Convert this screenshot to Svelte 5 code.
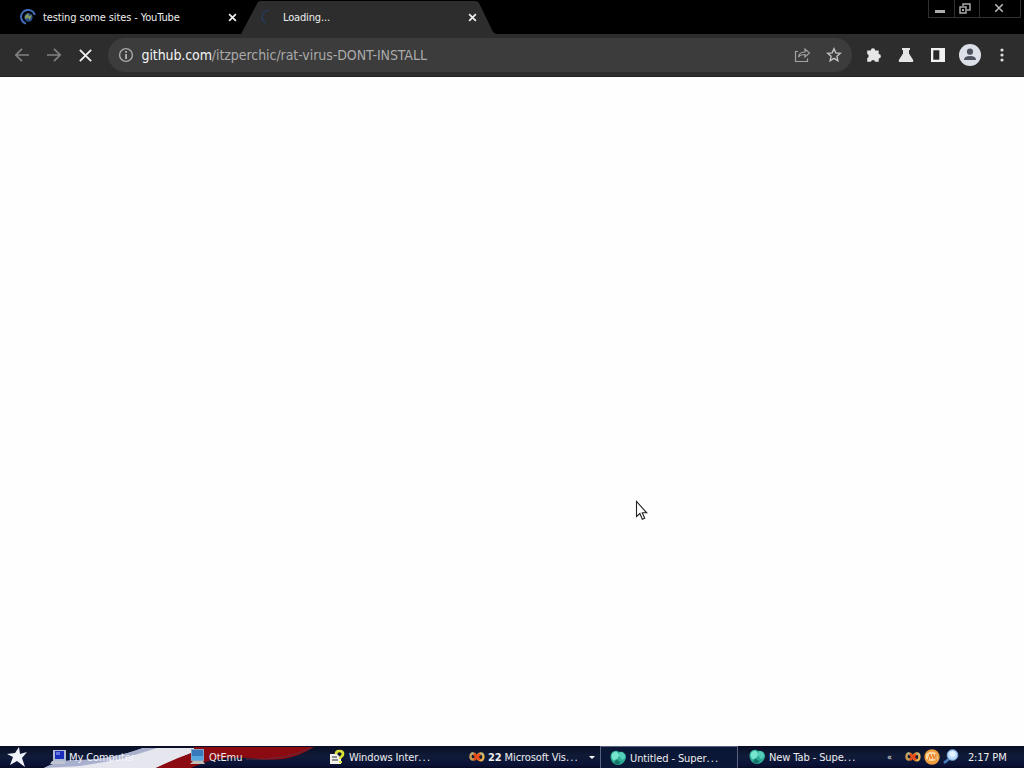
<script>
  const controls = ['minimize', 'restore', 'close'];
</script>

{#snippet cross(size, width)}
  <svg width={size} height={size} viewBox="0 0 12 12"><path d="M1.5 1.5 10.5 10.5M10.5 1.5 1.5 10.5" fill="none" stroke="currentColor" stroke-width={width} /></svg>
{/snippet}

{#snippet infinity()}
  <svg width="16" height="14" viewBox="0 0 16 14">
    <path d="M7.5 7C5.5 2.5 1.5 2.5 1.5 6.5s4 4 6 .5" fill="none" stroke="#c99c50" stroke-width="2.4" />
    <path d="M8 7c2-4.6 6.4-4.6 6.4 0S10 11.5 8 7" fill="none" stroke="#e6b44e" stroke-width="2.4" />
    <path d="M5 4 11 10M11 4 5 10" stroke="#e44b16" stroke-width="2.6" />
    <path d="m2 4 2-1M12 3.5l2 1" stroke="#9eb7a5" stroke-width="1.4" />
  </svg>
{/snippet}

{#snippet browserIcon()}
  <svg width="17" height="16" viewBox="0 0 17 16">
    <path d="M1 4C3 0 7 .3 9 2c3-1 7 1 7 5 0 4-4 8-8 8C3 15-1 9 1 4Z" fill="#2eae98" />
    <path d="M2 4c3-4 7-2 7 2l-3 5C2 10 1 7 2 4Z" fill="#76e6ce" />
    <path d="M9 3c3-2 7 1 6 5l-3 2-3-4Z" fill="#55cfba" />
    <path d="m6 9 4 3 2-1-4 4-4-2Z" fill="#147568" />
  </svg>
{/snippet}

<div class="screen">
  <header class="tabs">
    <svg class="tab-shape" width="258" height="34" viewBox="0 0 258 34"><path d="M1 34 18 2q1-1 3-1h214q3 0 4 2l14 29 3 2Z" fill="#2d2d2d" /></svg>
    <div class="tab first">
      <svg width="16" height="16" viewBox="0 0 16 16"><path d="M6 14.6A7 7 0 1 1 14.8 6" fill="none" stroke="#4169b4" stroke-width="2" /><circle cx="8.5" cy="8.5" r="4.2" fill="#284d8e" /><path d="m5 7 3-3 1 3 3-1-2 5-2-2-3 1Z" fill="#82985f" /></svg>
      <span class="tab-title">testing some sites - YouTube</span>
      <button aria-label="Close tab">{@render cross(9, 2.3)}</button>
    </div>
    <div class="tab second">
      <svg width="16" height="16" viewBox="0 0 16 16"><path d="M5.5 14A6.8 6.8 0 0 1 9 1.3" fill="none" stroke="#293954" stroke-width="1.7" /></svg>
      <span class="tab-title loading">Loading...</span>
      <button aria-label="Close tab">{@render cross(9, 2.3)}</button>
    </div>
    <div class="window-controls">
      {#each controls as control}
        <button class={control} aria-label={control}>
          {#if control === 'minimize'}
            <svg width="10" height="3"><path d="M0 0h10v3H0Z" fill="#aaa" /></svg>
          {:else if control === 'restore'}
            <svg width="12" height="11" viewBox="0 0 12 11"><path d="M1 4h6v6H1ZM4 3V1h7v6H8" fill="none" stroke="#aaa" stroke-width="1.5" /><path d="M3 6h2v2H3Z" fill="#aaa" /></svg>
          {:else}
            {@render cross(10, 2)}
          {/if}
        </button>
      {/each}
    </div>
  </header>

  <nav class="toolbar">
    <button class="nav back" aria-label="Back"><svg width="16" height="16" viewBox="0 0 16 16"><path d="M15 8H2M8 1.8 1.8 8 8 14.2" fill="none" stroke="#818181" stroke-width="1.7" /></svg></button>
    <button class="nav" aria-label="Forward"><svg width="16" height="16" viewBox="0 0 16 16"><path d="M1 8h13M8 1.8 14.2 8 8 14.2" fill="none" stroke="#818181" stroke-width="1.7" /></svg></button>
    <button class="nav stop" aria-label="Stop">{@render cross(15, 1.5)}</button>
    <div class="address">
      <svg class="info" width="16" height="16" viewBox="0 0 16 16"><circle cx="8" cy="8" r="6.4" fill="none" stroke="#aaa" stroke-width="1.4" /><path d="M7.2 7h1.7v5H7.2ZM7.2 4h1.7v1.7H7.2Z" fill="#bbb" /></svg>
      <span class="url"><b>github.com</b>/itzperchic/rat-virus-DONT-INSTALL</span>
      <svg class="share" width="17" height="16" viewBox="0 0 17 16"><path d="M4 4.5H1.5v10h12v-3M4.5 10C5 6.5 7.5 5 11 5V2l4.5 4-4.5 4V7.5C8 7.5 6 8 4.5 10Z" fill="none" stroke="#a4a4a4" stroke-width="1.2" /></svg>
      <svg class="star" width="16" height="16" viewBox="0 0 16 16"><path d="m8 1.8 1.8 4.1 4.5.4-3.4 3 1 4.4L8 11.4l-3.9 2.3 1-4.4-3.4-3 4.5-.4Z" fill="none" stroke="#c2c2c2" stroke-width="1.4" /></svg>
    </div>
    <div class="tools">
      <button aria-label="Extensions"><svg width="16" height="16" viewBox="0 0 16 16"><path d="M1.2 3.5h3.6a2.2 2.2 0 0 1 4.4 0h3.5V7a2.2 2.2 0 0 1 0 4.4v3.4H9.2a2.2 2.2 0 0 0-4.3 0H1.2v-3.6a2.2 2.2 0 0 0 0-4.2Z" fill="#e6e6e6" /></svg></button>
      <button aria-label="Experiments"><svg width="16" height="16" viewBox="0 0 16 16"><path d="M4 1h8v2h-1v3.5l4 6.2Q16 15 13.7 15H2.3Q0 15 1 12.7l4-6.2V3H4Z" fill="#e6e6e6" /></svg></button>
      <button aria-label="Side panel"><svg width="16" height="16" viewBox="0 0 16 16"><path d="M1 1h14v14H1Z" fill="#f1f1f1" /><path d="M3.3 3.3h6v9.4h-6Z" fill="#292929" /></svg></button>
      <button aria-label="Profile"><svg width="22" height="22" viewBox="0 0 22 22"><circle cx="11" cy="11" r="11" fill="#dce0e8" /><circle cx="11" cy="7.7" r="3.1" fill="#4c515e" /><path d="M5 16q0-4 6-4t6 4Z" fill="#4c515e" /></svg></button>
      <button aria-label="Menu"><svg width="4" height="16" viewBox="0 0 4 16"><circle cx="2" cy="3" r="1.6" fill="#ddd" /><circle cx="2" cy="8" r="1.6" fill="#ddd" /><circle cx="2" cy="13" r="1.6" fill="#ddd" /></svg></button>
    </div>
  </nav>

  <main>
    <svg class="cursor" width="13" height="21" viewBox="0 0 13 21"><path d="M1.5 1.5v15l3.4-3 2.4 5.7 2.4-1-2.4-5.4h4.4Z" fill="#fff" stroke="#222" stroke-width="1.1" /></svg>
  </main>

  <footer class="taskbar">
    <svg class="flag" width="330" height="22" viewBox="0 0 330 22">
      <path d="M44 22Q54 16 68 16q45-2 75-14h51v4l-38 16Z" fill="#e6e6ef" />
      <path d="M44 22Q62 13 78 14q32 0 65-12h14l-35 11-42 7Z" fill="#a8b0cd" />
      <path d="M156 22Q174 13 194 6V1h120q-14 9-30 12-16 2-33-1-26-2-46 4l-14 6Z" fill="#8c0a12" />
      <path d="M246 13q40 2 65-11" fill="none" stroke="#682a3b" />
      <path d="m19 1 1 7 7-2-5 6 3 9-8-6-7 4 3-8-6-3 8-1Z" fill="#f1f3fa" />
    </svg>
    <div class="task computer">
      <svg width="16" height="16" viewBox="0 0 16 16"><path d="M3 1h13v11H3Z" fill="#aebbd3" /><path d="M5 2h9v8H5Z" fill="#1b2dbd" /><path d="M6 3h4v3H6Z" fill="#6377dc" /><path d="M2 12h13v3H0Z" fill="#bec4cd" /></svg><span>My Computer</span>
    </div>
    <div class="task emu">
      <svg width="16" height="16" viewBox="0 0 16 16"><path d="M1 0h13v12H1Z" fill="#80a5c9" /><path d="M2 1h11v8H2Z" fill="#3879bb" /><path d="M2 7h11v4H2Z" fill="#56a7dd" /><path d="M3 12h10l2 3H0Z" fill="#c0bdb4" /></svg><span>QtEmu</span>
    </div>
    <div class="task inter">
      <svg width="16" height="16" viewBox="0 0 16 16"><path d="M1 5h7l4 4v6H1Z" fill="#f1f1e7" /><path d="M3 8h5M3 11h6" stroke="#252c45" /><path d="M7 5c0-4 7-4 7 0 0 3-3 2-3 5" fill="none" stroke="#dce536" stroke-width="2.7" /><path d="M10 12h3v2h-3Z" fill="#dce536" /></svg><span>Windows Inter<em>...</em></span>
    </div>
    <div class="task visual">{@render infinity()}<span><b>22</b> Microsoft Vis<em>...</em></span><i class="arrow"></i></div>
    <div class="task active">{@render browserIcon()}<span>Untitled - Super<em>...</em></span></div>
    <div class="task newtab">{@render browserIcon()}<span>New Tab - Supe<em>...</em></span></div>
    <div class="tray">
      <span class="chevron">«</span>
      {@render infinity()}
      <svg width="16" height="16" viewBox="0 0 16 16"><circle cx="8" cy="8" r="7.7" fill="#ed9c3c" /><path d="M2 5q6-5 11 0l1 5q-7 4-12 0Z" fill="#f9d8a2" /><path d="m4 11 2-6 1 5 2-5 1 5 2-5v6" fill="none" stroke="#e87820" /></svg>
      <svg width="16" height="16" viewBox="0 0 16 16"><path d="m1 14 6-5" stroke="#477fbd" stroke-width="2.5" /><circle cx="9.5" cy="6" r="5.3" fill="#b9dcff" stroke="#7fa8dc" /><circle cx="9.5" cy="5" r="3" fill="#e3f3ff" /></svg>
      <time>2:17 PM</time>
    </div>
  </footer>
</div>

<style>
  :global(body) { overflow: hidden; }
  .screen { width: 1024px; height: 768px; display: grid; grid-template-rows: 34px 43px 669px 22px; background: #fefefe; color: #eee; font: 11px "DejaVu Sans Condensed", "DejaVu Sans", sans-serif; }
  button { appearance: none; border: 0; padding: 0; margin: 0; background: none; color: inherit; display: grid; place-items: center; }
  svg { display: block; flex-shrink: 0; }
  .tabs { position: relative; display: flex; background: #000; }
  .tab-shape { position: absolute; left: 240px; top: 0; }
  .tab { position: relative; width: 240px; height: 34px; box-sizing: border-box; padding: 0 3px 0 20px; display: flex; align-items: center; gap: 7px; }
  .tab > svg { width: 16px; }
  .tab-title { flex: 1; white-space: nowrap; letter-spacing: -.13px; }
  .tab .loading { letter-spacing: -.15px; }
  .tab button { width: 10px; height: 12px; }
  .window-controls { margin-left: auto; margin-right: 3px; width: 93px; height: 18px; box-sizing: border-box; display: grid; grid-template-columns: 25px 25px 1fr; border: 1px solid #303030; border-top: 0; color: #b4b4b4; }
  .window-controls button + button { border-left: 1px solid #303030; }
  .window-controls .minimize { padding-top: 5px; padding-right: 4px; }
  .window-controls .restore { padding-right: 5px; }
  .window-controls .close { padding-right: 3px; padding-bottom: 2px; }
  .toolbar { background: #2d2d2d; border-bottom: 1px solid #222; box-sizing: border-box; display: flex; align-items: center; padding-left: 6px; }
  .nav { width: 32px; height: 42px; }
  .nav.stop { padding-right: 1px; }
  .address { width: 744px; height: 34px; box-sizing: border-box; border-radius: 17px; background: #3c3c3c; margin-left: 6px; display: flex; align-items: center; padding: 0 10px; }
  .url { flex: 1; font-size: 14px; line-height: 18px; color: #aaa; letter-spacing: -.06px; margin-left: 7.5px; padding-bottom: 1px; white-space: nowrap; }
  .url b { font-weight: 400; color: #f4f4f4; letter-spacing: -.1px; }
  .star { margin-left: 15px; }
  .tools { display: flex; align-items: center; margin-left: 6px; }
  .tools button { width: 32px; height: 32px; }
  main { position: relative; background: #fefefe; }
  .cursor { position: absolute; left: 635px; top: 423px; }
  .taskbar { position: relative; display: flex; background: linear-gradient(#080d24, #101b38 45%, #0a1237 85%, #050924); font-size: 11px; }
  .flag { position: absolute; left: 0; top: 0; }
  .task { position: relative; box-sizing: border-box; height: 22px; display: flex; align-items: center; gap: 4px; white-space: nowrap; letter-spacing: -.1px; }
  .task em { font-style: normal; letter-spacing: 1.2px; }
  .computer { width: 140px; margin-left: 50px; gap: 3px; color: #f4f4fa; }
  .emu { width: 139px; gap: 3px; }
  .inter { width: 140px; }
  .visual { width: 131px; gap: 3px; }
  .active { width: 138px; padding: 1px 0 0 9px; gap: 3px; border: 1px solid #59617c; border-bottom: 0; background: #0b1736; }
  .newtab { width: 141px; padding-left: 11px; gap: 3px; }
  .arrow { border: 3px solid transparent; border-top-color: #fff; border-bottom: 0; margin-left: auto; margin-right: 5px; }
  .tray { height: 22px; display: flex; align-items: center; gap: 3px; }
  .chevron { width: 15px; margin-left: 8px; font-size: 9px; }
  time { margin-left: 6px; letter-spacing: -.2px; white-space: nowrap; }
</style>
